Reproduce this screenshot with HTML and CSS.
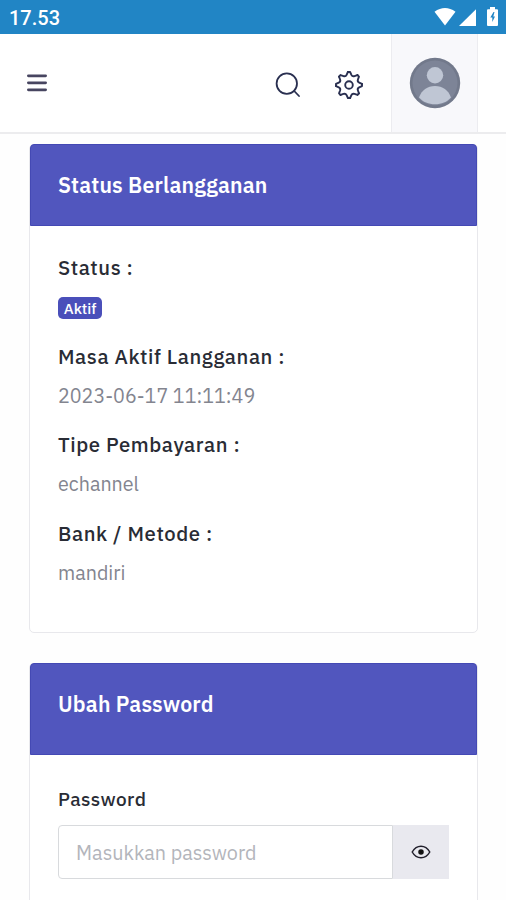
FILE: index.html
```html
<!DOCTYPE html>
<html lang="id">
<head>
<meta charset="utf-8">
<meta name="viewport" content="width=device-width, initial-scale=1">
<title>Status Berlangganan</title>
<link rel="stylesheet" href="styles.css">
</head>
<body>
<div class="statusbar">
  <span class="clock">17.53</span>
  <svg class="signals" width="66" height="20" viewBox="0 0 66 20" fill="#fff">
    <path d="M.5 4.7Q11 -2.8 21.5 4.7L11 18.5Z"/>
    <path d="M25 19L42 2.2V19Z"/>
    <path d="M54 2.2H56V0H61V2.2H63Q64 2.2 64 3.2V18Q64 19 63 19H54Q53 19 53 18V3.2Q53 2.2 54 2.2Z"/>
    <path d="M59.5 5L56.3 10.5H58.3V15L61 9.5H59.3L60.5 5Z" fill="#2185c5"/>
  </svg>
</div>
<header class="topbar">
  <svg class="menu" width="20" height="18" viewBox="0 0 20 18" stroke="#474560" stroke-width="2.8" stroke-linecap="round"><path d="M1.4 1.8H18.6M1.4 8.8H18.6M1.4 15.8H18.6"/></svg>
  <svg class="search" width="26" height="26" viewBox="0 0 26 26" fill="none" stroke="#292f50" stroke-width="1.8" stroke-linecap="round"><circle cx="11.8" cy="11.6" r="10.2"/><path d="M19.2 19L24 24"/></svg>
  <svg class="gear" width="30" height="30" viewBox="-15 -15 30 30" fill="none" stroke="#292f50" stroke-width="1.9" stroke-linejoin="round" stroke-linecap="round">
    <defs><path id="tooth" d="M-1.1 -13L1.1 -13L2.4 -10.2Q3.44 -8.1 5.52 -8.91L8.41 -9.97"/></defs>
    <use href="#tooth"/><use href="#tooth" transform="rotate(45)"/><use href="#tooth" transform="rotate(90)"/><use href="#tooth" transform="rotate(135)"/><use href="#tooth" transform="rotate(180)"/><use href="#tooth" transform="rotate(225)"/><use href="#tooth" transform="rotate(270)"/><use href="#tooth" transform="rotate(315)"/>
    <circle r="3.8"/>
  </svg>
  <div class="profile">
    <svg width="52" height="52" viewBox="0 0 52 52">
      <circle cx="26" cy="26" r="25.2" fill="#72798b"/>
      <circle cx="26" cy="26" r="22.5" fill="#7d8497"/>
      <circle cx="26" cy="18.2" r="8.2" fill="#bfc6d4"/>
      <path d="M10 40.5C12.5 33.2 18.5 29 26 29S39.5 33.2 42 40.5C38 45 32.5 47.3 26 47.3S14 45 10 40.5Z" fill="#bfc6d4"/>
    </svg>
  </div>
</header>
<main>
  <section class="card">
    <h2 class="card-head">Status Berlangganan</h2>
    <div class="card-body">
      <div class="label">Status :</div>
      <div class="value"><span class="badge">Aktif</span></div>
      <div class="label">Masa Aktif Langganan :</div>
      <div class="value">2023-06-17 11:11:49</div>
      <div class="label">Tipe Pembayaran :</div>
      <div class="value">echannel</div>
      <div class="label">Bank / Metode :</div>
      <div class="value">mandiri</div>
    </div>
  </section>
  <section class="card card-form">
    <h2 class="card-head">Ubah Password</h2>
    <div class="form">
      <label class="field-label" for="pw">Password</label>
      <div class="group">
        <input id="pw" type="password" placeholder="Masukkan password">
        <button class="eye" type="button" aria-label="Password">
          <svg width="20" height="14" viewBox="0 0 20 14" fill="none" stroke="#22202c" stroke-width="1.5"><path d="M1.2 7C3.5 3 6.5 1.2 10 1.2S16.5 3 18.8 7C16.5 11 13.5 12.8 10 12.8S3.5 11 1.2 7Z"/><circle cx="10" cy="7" r="2" fill="#111" stroke="#111"/></svg>
        </button>
      </div>
    </div>
  </section>
</main>
</body>
</html>
```
FILE: styles.css
```css
* { box-sizing: border-box; }
body {
  margin: 0;
  height: 900px;
  display: flex;
  flex-direction: column;
  background: #fefefe;
  font-family: "IBM Plex Sans", "Noto Sans", sans-serif;
  font-size: 20px;
  color: #292c35;
}
.statusbar {
  height: 34px;
  flex: none;
  background: #2185c5;
  display: flex;
  justify-content: space-between;
  padding: 7px 6px 0 9px;
}
.clock { font: 500 20px/22px Roboto, sans-serif; color: #fff; }
.topbar {
  height: 100px;
  flex: none;
  display: flex;
  align-items: center;
  background: #fff;
  border-bottom: 2px solid #ececee;
  padding: 0 27px;
}
.menu { margin-right: 228px; }
.search { margin: 3px 33px 0 0; }
.gear { margin: 3px 27px 0 0; }
.profile {
  height: 98px;
  width: 87px;
  flex: none;
  background: #f8f8fb;
  border: solid #ececf0;
  border-width: 0 1px;
  display: flex;
  align-items: center;
  justify-content: center;
}
main {
  flex: 1;
  min-height: 0;
  display: flex;
  flex-direction: column;
  padding: 10px 28px 0 29px;
}
.card {
  flex: none;
  border: 1px solid #e8e8ec;
  border-radius: 5px;
  height: 489px;
  margin-bottom: 30px;
  background: #fff;
}
.card-head {
  margin: -1px 0 0;
  height: 82px;
  padding: 26px 27px 0;
  background: #5156be;
  border: 1px solid #4449b4;
  border-radius: 4px 4px 0 0;
  color: #fff;
  font-size: 21.3px;
  line-height: 28px;
  font-weight: 600;
  letter-spacing: 0.18px;
}
.card-form {
  flex: 1;
  min-height: 0;
  margin-bottom: 0;
  border-bottom: 0;
  border-radius: 5px 5px 0 0;
}
.card-form .card-head { height: 92px; }
.card-body { padding: 27px 28px 0; }
.label {
  height: 30px;
  line-height: 30px;
  font-size: 20.3px;
  font-weight: 500;
  letter-spacing: 0.58px;
  margin-bottom: 8px;
}
.value {
  height: 30px;
  line-height: 32px;
  font-size: 19.7px;
  color: #83858f;
  margin-bottom: 20.6px;
}
.badge {
  display: block;
  width: 44px;
  height: 22px;
  border-radius: 5px;
  background: #4a4fba;
  color: #fff;
  font-size: 15px;
  line-height: 23px;
  font-weight: 500;
  text-align: center;
  position: relative;
  top: 6px;
}
.form { padding: 30px 28px 0; }
.field-label {
  display: block;
  height: 30px;
  line-height: 29px;
  font-weight: 500;
  font-size: 19px;
  letter-spacing: 0.45px;
}
.group { display: flex; height: 54px; margin-top: 10px; }
input {
  width: 335px;
  padding: 0 17px;
  border: 1.5px solid #d8dadd;
  border-radius: 4px 0 0 4px;
  background: #fff;
  font: 19.8px "IBM Plex Sans", "Noto Sans", sans-serif;
}
input::placeholder { color: #b3b5bb; opacity: 1; }
.eye {
  width: 56px;
  border: 0;
  padding: 0;
  background: #e9e9ef;
  display: flex;
  align-items: center;
  justify-content: center;
}
```
